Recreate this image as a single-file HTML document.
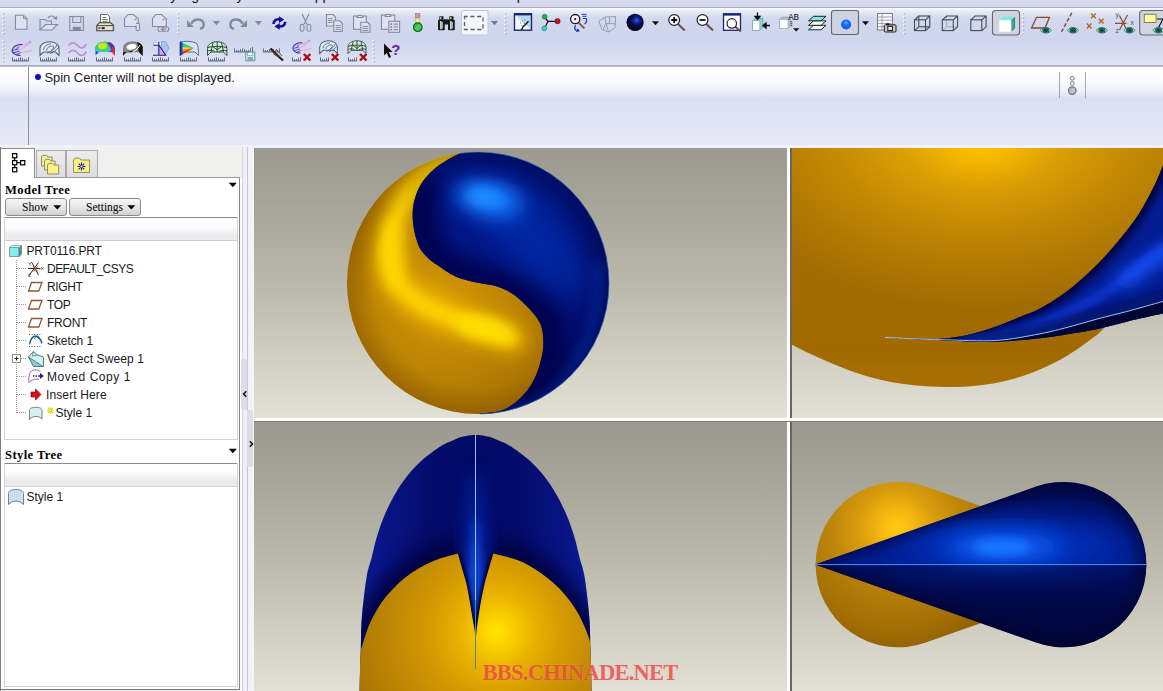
<!DOCTYPE html>
<html lang="en">
<head>
<meta charset="utf-8">
<title>PRT0116 - Style</title>
<style>
html,body{margin:0;padding:0;}
body{width:1163px;height:691px;overflow:hidden;position:relative;background:#e6e8f5;font-family:"Liberation Sans","Noto Sans CJK TC",sans-serif;font-size:12px;color:#1a1a1a;}
.abs{position:absolute;}
#menubar{left:0;top:0;width:1163px;height:7px;background:#d6dbf0;overflow:hidden;}
#menubar span{position:absolute;top:-12.500px;font-size:14px;line-height:14px;color:#111;white-space:nowrap;}
#menuline{left:0;top:7px;width:1163px;height:1px;background:#a9adc4;}
#toolbar{left:0;top:8px;width:1163px;height:57px;background:linear-gradient(to bottom,#fbfcff 0px,#e9ecf8 3px,#d3d9ee 10px,#ced5ec 30px,#d4daef 42px,#e0e4f4 57px);}
#toolline{left:0;top:65px;width:1163px;height:2px;background:linear-gradient(to bottom,#9c9fb4,#c9cbd9);}
#msg{left:0;top:67px;width:1163px;height:78px;background:linear-gradient(to bottom,#ffffff 0px,#fbfbfe 14px,#f2f3fb 22px,#dcdff1 31px,#dfe2f3 45px,#e7e9f6 78px);}
#msgsep{left:28px;top:67px;width:1px;height:78px;background:#8d8f9c;}
#msgtext{left:44.5px;top:70px;font-size:13px;line-height:16px;white-space:nowrap;color:#1c1c1c;letter-spacing:-0.06px;}
#bullet{left:35px;top:74px;width:6px;height:6px;border-radius:3px;background:#1010c0;}
#midline{left:0;top:145px;width:1163px;height:3px;background:#f1f2f9;}
/* left panel */
#panel{left:0;top:147px;width:242px;height:544px;background:#f0f0ee;}
#panelL{left:0;top:147px;width:1px;height:544px;background:#7f7f86;}
#panelwhite{left:1px;top:177px;width:238px;height:512px;background:#fff;border-right:1px solid #85858a;border-bottom:1px solid #75757a;}
.tab{position:absolute;background:linear-gradient(to bottom,#ededed,#dcdce2);border:1px solid #a9a9ae;border-bottom:none;}
.sect{position:absolute;font-family:"Liberation Serif",serif;font-weight:bold;font-size:12.6px;line-height:14px;color:#000;white-space:nowrap;letter-spacing:0.4px;}
.btn{position:absolute;height:16px;border:1px solid #8c8c8c;border-radius:3px;background:linear-gradient(to bottom,#f6f6f6 0%,#e6e6e6 50%,#d2d2d2 100%);font-family:"Liberation Serif",serif;font-size:11.5px;line-height:16px;color:#000;white-space:nowrap;}
.hdr{position:absolute;left:5px;width:232px;background:linear-gradient(to bottom,#ffffff 0%,#fdfdfd 40%,#e9e9ee 80%,#ececf0 100%);border-top:1px solid #8a8a8a;border-bottom:1px solid #cfcfd3;}
.ti{position:absolute;font-size:12px;line-height:14px;white-space:nowrap;color:#1a1a1a;}
.hd{position:absolute;height:1px;background-image:repeating-linear-gradient(to right,#9a9a9a 0,#9a9a9a 1px,transparent 1px,transparent 2px);}
.vd{position:absolute;width:1px;background-image:repeating-linear-gradient(to bottom,#9a9a9a 0,#9a9a9a 1px,transparent 1px,transparent 2px);}
/* sash */
#sash{left:242px;top:147px;width:12px;height:544px;background:linear-gradient(to right,#d6d7de 0px,#d6d7de 1px,#eef0f8 1px,#eef0f8 5px,#c5c9da 5px,#c5c9da 6px,#f1f2f9 6px,#f4f5fb 12px);}
/* viewports */
.vp{position:absolute;overflow:hidden;background:linear-gradient(to bottom,#9c9990 0%,#a6a397 20%,#bab7ab 50%,#d3d0c4 80%,#e3e0d5 100%);}
#vdiv{left:787px;top:148px;width:3px;height:543px;background:#fdfdff;}
#vdiv2{left:790px;top:148px;width:2px;height:543px;background:#69655f;}
#hdiv{left:254px;top:418px;width:909px;height:3px;background:#fdfdff;}
#hdiv2{left:254px;top:421px;width:909px;height:1px;background:#7d796f;}
#wm{left:482.500px;top:659.500px;font-family:"Liberation Serif",serif;font-weight:bold;font-size:22.500px;line-height:26px;color:rgba(232,44,52,0.660);white-space:nowrap;letter-spacing:-0.750px;text-shadow:0 0 1.500px rgba(255,190,150,0.500);}
</style>
</head>
<body>
<!-- menu bar (cut off at the top edge) -->
<div id="menubar" class="abs">
<span style="left:14px">File</span><span style="left:52px">Edit</span><span style="left:94px">View</span><span style="left:157px">Styling</span><span style="left:208.500px">Analysis</span><span style="left:270px">Info</span><span style="left:305.500px">Applications</span><span style="left:394px">Tools</span><span style="left:438px">Window</span><span style="left:495.800px">Help</span>
</div>
<div id="menuline" class="abs"></div>
<div id="toolbar" class="abs"></div>
<div id="toolline" class="abs"></div>
<div id="msg" class="abs"></div>
<div id="msgsep" class="abs"></div>
<div id="bullet" class="abs"></div>
<div id="msgtext" class="abs">Spin Center will not be displayed.</div>
<div id="midline" class="abs"></div>

<!-- LEFT PANEL -->
<div id="panel" class="abs"></div>
<div class="abs" style="left:240px;top:178px;width:2px;height:513px;background:#fdfdfd;"></div>
<div id="panelwhite" class="abs"></div>
<div id="panelL" class="abs"></div>
<!--TABS--><div class="abs" style="left:35px;top:177px;width:205px;height:1px;background:#9a9a9e;"></div>
<div class="abs" style="left:0;top:148px;width:35px;height:30px;background:#fff;border-top:1px solid #8e8e92;border-right:1px solid #8e8e92;border-left:1px solid #7f7f86;box-sizing:border-box;"></div>
<div class="tab" style="left:36px;top:150px;width:28px;height:26px;"></div>
<div class="tab" style="left:66px;top:150px;width:30px;height:26px;"></div>
<svg class="abs" style="left:0;top:148px" width="100" height="30" viewBox="0 148 100 30">
<g fill="#fff" stroke="#000" stroke-width="1.2">
<rect x="12.6" y="153.6" width="4.2" height="4.2"/><rect x="12.6" y="160.6" width="4.2" height="4.2"/><rect x="12.6" y="167.6" width="4.2" height="4.2"/><rect x="20.6" y="160.6" width="4.2" height="4.2"/>
</g>
<path d="M14.7 158v2.4M14.7 165v2.4M17 162.7h3.4" stroke="#000" stroke-width="1.2" fill="none"/>
<g stroke="#8a8658" stroke-width="0.9">
<path d="M41.5 166V157l1.2-1.6h4l1.2 1.6h4.2V166Z" fill="#f3ec9a"/>
<path d="M44.5 170V161l1.2-1.6h4l1.2 1.6h4.2V170Z" fill="#f5ee94"/>
<path d="M47.5 174V165l1.2-1.6h4l1.2 1.6h4.8V174Z" fill="#f8f18a"/>
<path d="M73.5 172.5V160l1.4-1.8h4.6l1.4 1.8h8.6v12.5Z" fill="#f7f07e"/>
</g>
<g stroke="#1a20b0" stroke-width="1.1"><path d="M81.5 162.5v8M77.5 166.5h8M78.7 163.7l5.6 5.6M84.3 163.7l-5.6 5.6"/></g>
<circle cx="81.5" cy="166.5" r="1.3" fill="#fff" stroke="#1a20b0" stroke-width="0.6"/>
</svg><!--/TABS-->
<!--TREE--><div class="sect" style="left:5px;top:182.5px;">Model Tree</div>
<svg class="abs" style="left:228px;top:182px" width="10" height="6" viewBox="0 0 10 6"><path d="M0.8 0.8h8L4.8 5.2Z" fill="#000"/></svg>
<div class="btn" style="left:5px;top:198px;width:60px;"><span style="position:absolute;left:16px;top:0;">Show</span><svg style="position:absolute;left:47px;top:6px" width="9" height="5" viewBox="0 0 9 5"><path d="M0.3 0.2h8L4.3 4.6Z" fill="#000"/></svg></div>
<div class="btn" style="left:69px;top:198px;width:70px;"><span style="position:absolute;left:16px;top:0;">Settings</span><svg style="position:absolute;left:57px;top:6px" width="9" height="5" viewBox="0 0 9 5"><path d="M0.3 0.2h8L4.3 4.6Z" fill="#000"/></svg></div>
<div class="abs" style="left:4px;top:217px;width:234px;height:223px;border:1px solid #d2d2d6;border-top:none;box-sizing:border-box;"></div>
<div class="hdr" style="top:217px;height:22px;"></div>
<!-- tree connector lines -->
<div class="vd" style="left:16px;top:260px;height:153px;"></div>
<div class="hd" style="left:17px;top:268px;width:10px;"></div>
<div class="hd" style="left:17px;top:286px;width:10px;"></div>
<div class="hd" style="left:17px;top:304px;width:10px;"></div>
<div class="hd" style="left:17px;top:322px;width:10px;"></div>
<div class="hd" style="left:17px;top:340px;width:10px;"></div>
<div class="hd" style="left:21px;top:358px;width:6px;"></div>
<div class="hd" style="left:17px;top:376px;width:10px;"></div>
<div class="hd" style="left:17px;top:394px;width:10px;"></div>
<div class="hd" style="left:17px;top:412px;width:10px;"></div>
<!-- tree labels -->
<div class="ti" style="left:26.5px;top:244px;letter-spacing:-0.13px;">PRT0116.PRT</div>
<div class="ti" style="left:47px;top:262px;letter-spacing:-0.53px;">DEFAULT_CSYS</div>
<div class="ti" style="left:47px;top:280px;letter-spacing:-0.40px;">RIGHT</div>
<div class="ti" style="left:47px;top:298px;letter-spacing:-0.38px;">TOP</div>
<div class="ti" style="left:47px;top:316px;letter-spacing:-0.22px;">FRONT</div>
<div class="ti" style="left:47px;top:334px;letter-spacing:-0.08px;">Sketch 1</div>
<div class="ti" style="left:47px;top:352px;letter-spacing:0.12px;">Var Sect Sweep 1</div>
<div class="ti" style="left:47px;top:370px;letter-spacing:0.55px;">Moved Copy 1</div>
<div class="ti" style="left:46px;top:388px;letter-spacing:0.12px;">Insert Here</div>
<div class="ti" style="left:55.5px;top:406px;letter-spacing:-0.02px;">Style 1</div>
<!-- style tree -->
<div class="sect" style="left:5px;top:448px;">Style Tree</div>
<svg class="abs" style="left:228px;top:448px" width="10" height="6" viewBox="0 0 10 6"><path d="M0.8 0.8h8L4.8 5.2Z" fill="#000"/></svg>
<div class="abs" style="left:4px;top:463px;width:234px;height:224px;border:1px solid #d2d2d6;border-top:none;box-sizing:border-box;"></div>
<div class="hdr" style="top:463px;height:22px;"></div>
<div class="ti" style="left:26.5px;top:490px;letter-spacing:-0.02px;">Style 1</div>
<!--TREEICONS--><svg class="abs" style="left:0;top:240px" width="60" height="270" viewBox="0 240 60 270">
<!-- part cube -->
<path d="M9.5 247.5h9.5v9h-9.5Z" fill="#86ecf4" stroke="#6a8a94" stroke-width="0.8"/>
<path d="M19 247.5l2.6-2v8.8l-2.6 2.2Z" fill="#4f8e98" stroke="#56767e" stroke-width="0.6"/>
<path d="M9.5 247.5l2.6-2h9.5l-2.6 2Z" fill="#c8f6fa" stroke="#6a8a94" stroke-width="0.6"/>
<!-- csys -->
<g stroke="#2a2a2a" stroke-width="1" fill="none"><path d="M28 268.5h12.5"/><path d="M31.5 262l7 13"/><path d="M29 275.5l9.5-13"/></g>
<g stroke="#8b4a1c" stroke-width="1.1" fill="none"><path d="M33 266l4.5 5.5M33.5 271.5l4-5"/></g>
<g stroke="#555" stroke-width="0.8" fill="none"><path d="M41 267l2.6 2.8M43.6 267l-2.6 2.8"/><path d="M28.5 262.5l1.4 1.6 1.2-1.8M29.9 264.1v1.5"/><path d="M28.3 274.2h2.2l-2.2 2.2h2.4"/></g>
<!-- datum planes -->
<g fill="none" stroke="#8b5a3a" stroke-width="1.3"><path d="M31.5 282.5h10.5l-3.2 8.5h-10.3Z"/><path d="M31.5 300.5h10.5l-3.2 8.5h-10.3Z"/><path d="M31.5 318.5h10.5l-3.2 8.5h-10.3Z"/></g>
<!-- sketch -->
<g fill="none" stroke="#2a62b8" stroke-width="1" stroke-dasharray="1 1.6"><path d="M29 334.5h13M29 346.5h13"/></g>
<path d="M29.5 344.5c1-6 4-8.5 6.5-8.5s4.5 3 6 7.5" fill="none" stroke="#1a5a8c" stroke-width="1.4"/>
<path d="M34 339l3-2.5 2.5 3" fill="none" stroke="#1a5a8c" stroke-width="0.9"/>
<!-- expand box -->
<rect x="12.5" y="354.5" width="8" height="8" fill="#fff" stroke="#8c8c8c" stroke-width="1"/>
<path d="M14.5 358.5h4M16.5 356.5v4" stroke="#222" stroke-width="1"/>
<!-- var sect sweep -->
<path d="M28.5 357l4.8-5.5 4.2 3.5 6 2v9.5h-9.5Z" fill="#d4f2f4" stroke="#3a6e80" stroke-width="0.9"/>
<path d="M28.5 357l5 9.5h9.5Z" fill="#9ec4cc" stroke="#3a6e80" stroke-width="0.8"/>
<path d="M33.3 351.5l-0.8 4.5 5-1" fill="none" stroke="#3a6e80" stroke-width="0.7"/>
<!-- moved copy -->
<path d="M29 382.5c-1-7 1-12 5-12.5 3-0.5 5 0.5 6.5 2M29 382.5c2-2.5 6-4 10-3" fill="none" stroke="#a060b8" stroke-width="1"/>
<path d="M33 376h1.4M35.6 376h1.4M38.2 376h1.8" stroke="#401070" stroke-width="1.6"/>
<path d="M40 373l3.8 3-3.8 3Z" fill="#401070"/>
<!-- insert here arrow -->
<path d="M31 392h4.5v-3.2l5.5 5.7-5.5 5.7v-3.2H31Z" fill="#d81010" stroke="#7a0000" stroke-width="0.6"/>
<!-- style surface -->
<path d="M29.5 419.5v-9c0-2 2.5-3.2 6.500-3.200s6 1.200 6 3.200v8.500c-3-3.500-9.500-3.500-12.500 0.500Z" fill="#d8f0f2" stroke="#5a7a82" stroke-width="0.9"/>
<!-- asterisk -->
<g stroke="#d4d400" stroke-width="1.200"><path d="M50.500 407v7M47 410.500h7M48 408l5 5M53 408l-5 5"/></g>
<g stroke="#f8f840" stroke-width="0.600"><path d="M50.500 407.500v6M47.500 410.500h6"/></g>
<!-- style tree item icon -->
<path d="M8.500 504.500v-11c0-2.500 3-4 7.500-4s7.500 1.500 7.500 4v11c-3.500-4.500-11.500-4.500-15 0Z" fill="#cfe4f8" stroke="#6a8098" stroke-width="1"/>
<g stroke="#8ab0dc" stroke-width="0.5" stroke-dasharray="0.8 1.200"><path d="M10 492h12M10 494h12M10 496h12M10 498h12M10 500h12"/></g>
</svg><!--/TREE-->

<div id="sash" class="abs"></div>
<div class="abs" style="left:241px;top:359px;width:6px;height:51px;background:#dddde6;border-radius:2px;"></div>
<div class="abs" style="left:247px;top:410px;width:6px;height:57px;background:#dddde6;border-radius:2px;"></div>
<svg class="abs" style="left:241px;top:388px" width="14" height="62" viewBox="241 388 14 62"><path d="M246.300 391.200l-2.700 2.800 2.700 2.800" fill="none" stroke="#101010" stroke-width="1.500"/><path d="M249.800 441.200l2.700 2.800-2.700 2.800" fill="none" stroke="#101010" stroke-width="1.500"/></svg>

<!-- VIEWPORTS -->
<div class="vp" id="vp1" style="left:254px;top:148px;width:533px;height:270px;"><svg class="abs" style="left:0;top:0" width="533" height="270" viewBox="254 148 533 270">
<defs>
<clipPath id="c1"><circle cx="478" cy="283" r="131"/></clipPath>
<clipPath id="c1b"><path d="M459.5 153.5C457.6 154.5 452.2 156.9 447.9 159.6C443.5 162.3 437.7 165.8 433.4 169.7C429.1 173.5 424.9 178.1 421.9 182.7C418.9 187.3 416.8 192.4 415.3 197.2C413.8 202.0 412.9 206.4 412.7 211.7C412.5 217.0 412.8 223.2 413.9 229C414.9 234.8 416.8 241.7 419 246.4C421.2 251.1 424.1 254.0 427 257C429.9 260.0 431.7 261.3 436.5 264.6C441.3 267.9 449.0 273.7 455.9 276.7C462.8 279.7 470.9 281.2 477.8 282.8C484.7 284.4 491.1 284.5 497.2 286.5C503.3 288.5 508.9 291.4 514.2 295C519.5 298.6 524.7 304.1 528.8 308.3C532.9 312.6 536.3 316.7 538.6 320.5C540.9 324.3 541.6 326.6 542.4 331C543.2 335.4 543.6 341.7 543.2 347.2C542.8 352.7 541.5 358.5 539.8 364.2C538.1 369.9 536.1 376.0 533.2 381.3C530.4 386.6 526.7 391.6 522.7 395.8C518.7 400.1 513.6 404.2 509.4 406.8C505.1 409.4 502.1 410.5 497.2 411.6C492.3 412.7 483.0 413.3 480.2 413.6L480 430L640 430L640 130L455 130Z"/></clipPath>
<radialGradient id="g1gold" cx="440" cy="300" r="140" gradientUnits="userSpaceOnUse">
<stop offset="0" stop-color="#d29606"/><stop offset="0.5" stop-color="#bc8404"/><stop offset="0.85" stop-color="#a87202"/><stop offset="1" stop-color="#966200"/>
</radialGradient>
<radialGradient id="g1rim" cx="478" cy="283" r="131" gradientUnits="userSpaceOnUse">
<stop offset="0" stop-color="#7a4c00" stop-opacity="0"/><stop offset="0.8" stop-color="#7a4c00" stop-opacity="0"/><stop offset="1" stop-color="#7a4c00" stop-opacity="0.4"/>
</radialGradient>
<radialGradient id="g1brim" cx="478" cy="283" r="131" gradientUnits="userSpaceOnUse"><stop offset="0" stop-color="#000648" stop-opacity="0"/><stop offset="0.78" stop-color="#000648" stop-opacity="0"/><stop offset="1" stop-color="#000648" stop-opacity="0.550"/></radialGradient>
<radialGradient id="g1blue" cx="500" cy="215" r="190" gradientUnits="userSpaceOnUse">
<stop offset="0" stop-color="#001a90"/><stop offset="0.35" stop-color="#001684"/><stop offset="0.7" stop-color="#001076"/><stop offset="1" stop-color="#000a64"/>
</radialGradient>
<filter id="b6" x="-50%" y="-50%" width="200%" height="200%"><feGaussianBlur stdDeviation="6"/></filter>
<filter id="b10" x="-50%" y="-50%" width="200%" height="200%"><feGaussianBlur stdDeviation="10"/></filter>
<filter id="b14" x="-50%" y="-50%" width="200%" height="200%"><feGaussianBlur stdDeviation="14"/></filter>
</defs>
<g clip-path="url(#c1)">
<circle cx="478" cy="283" r="132" fill="url(#g1gold)"/>
<path d="M452 157C450.0 157.8 444.7 159.3 440 162C435.3 164.7 429.0 168.8 424 173C419.0 177.2 414.0 182.0 410 187C406.0 192.0 402.8 197.2 400 203C397.2 208.8 394.8 215.0 393 222C391.2 229.0 390.0 237.8 389.5 245C389.0 252.2 388.6 258.7 390 265C391.4 271.3 394.3 277.5 398 283C401.7 288.5 405.4 293.2 412 298C418.6 302.8 428.1 307.7 437.6 312C447.1 316.3 459.2 320.4 468.9 323.7C478.6 326.9 488.9 328.9 496 331.5C503.1 334.1 509.2 338.0 511.8 339.3" fill="none" stroke="#ffcc00" stroke-width="24" stroke-linecap="round" filter="url(#b10)"/>
<path d="M452 157C450.0 157.8 444.7 159.3 440 162C435.3 164.7 429.0 168.8 424 173C419.0 177.2 414.0 182.0 410 187C406.0 192.0 402.8 197.2 400 203C397.2 208.8 394.8 215.0 393 222C391.2 229.0 390.0 237.8 389.5 245C389.0 252.2 388.6 258.7 390 265C391.4 271.3 394.3 277.5 398 283C401.7 288.5 405.4 293.2 412 298C418.6 302.8 428.1 307.7 437.6 312C447.1 316.3 459.2 320.4 468.9 323.7C478.6 326.9 488.9 328.9 496 331.5C503.1 334.1 509.2 338.0 511.8 339.3" fill="none" stroke="#ffe000" stroke-width="8" stroke-linecap="round" filter="url(#b6)" opacity="0.9"/>
<ellipse cx="484" cy="329" rx="30" ry="12" transform="rotate(16 484 329)" fill="#ffe000" filter="url(#b6)" opacity="0.850"/>
<ellipse cx="392" cy="255" rx="11" ry="38" transform="rotate(-4 392 255)" fill="#ffd800" filter="url(#b6)" opacity="0.700"/>
<circle cx="478" cy="283" r="131" fill="url(#g1rim)"/>
<g clip-path="url(#c1b)">
<rect x="380" y="140" width="250" height="290" fill="url(#g1blue)"/>
<path d="M430 175C415 200 415 240 440 262C470 285 520 280 545 320C556 345 545 385 515 410" fill="none" stroke="#000448" stroke-width="34" filter="url(#b10)" opacity="0.9"/>
<ellipse cx="535" cy="240" rx="70" ry="26" transform="rotate(48 535 240)" fill="#0430b4" filter="url(#b14)" opacity="0.6"/>
<ellipse cx="489" cy="199" rx="34" ry="17" transform="rotate(12 489 199)" fill="#1278ff" filter="url(#b10)"/>
<ellipse cx="485" cy="197" rx="18" ry="9" transform="rotate(8 485 197)" fill="#1a8cff" filter="url(#b6)"/>
<circle cx="478" cy="283" r="131" fill="url(#g1brim)"/>
<path d="M597 262C602 300 594 346 558 388C545 401 528 409 508 412" fill="none" stroke="#0a36b8" stroke-width="7" filter="url(#b6)" opacity="0.7"/>
</g>
</g>
<circle cx="478" cy="283" r="131" fill="none" stroke="#3a78c8" stroke-width="0.8" stroke-dasharray="203 396 224 0" opacity="0.800"/>
</svg></div>
<div class="vp" id="vp2" style="left:792px;top:148px;width:371px;height:270px;"><svg class="abs" style="left:0;top:0" width="371" height="270" viewBox="792 148 371 270">
<defs>
<clipPath id="c2g"><path d="M770 332C773.7 334.1 783.8 340.5 792 344.8C800.2 349.1 810.3 353.9 819.5 358C828.7 362.1 837.8 366.1 847 369.5C856.2 372.9 865.4 375.9 874.6 378.3C883.8 380.7 892.8 382.4 902 383.8C911.2 385.2 920.4 386.1 929.6 386.6C938.8 387.1 947.8 387.2 957 386.9C966.2 386.6 975.4 386.0 984.6 384.7C993.8 383.4 1002.8 381.7 1012 379.2C1021.2 376.7 1030.5 373.4 1039.7 369.5C1048.9 365.6 1057.8 361.3 1067 355.8C1076.2 350.3 1088.9 340.7 1094.7 336.5C1100.5 332.3 1096.5 335.2 1101.6 330.5C1106.6 325.8 1121.1 311.8 1125 308L1180 140L770 140Z"/></clipPath>
<clipPath id="c2b"><path d="M885 337.4C891.3 337.7 912.9 338.8 923 339C933.1 339.2 937.6 339.3 945.6 338.5C953.6 337.7 962.4 336.2 970.8 334.2C979.2 332.2 987.6 329.6 996 326.6C1004.4 323.7 1013.7 319.5 1021 316.5C1028.3 313.5 1032.0 313.1 1040 308.6C1048.0 304.2 1059.3 297.3 1069 289.8C1078.7 282.3 1089.2 272.5 1097.9 263.8C1106.6 255.1 1114.2 245.9 1121 237.7C1127.8 229.5 1133.1 222.8 1138.4 214.6C1143.7 206.4 1148.8 196.7 1152.9 188.5C1157.0 180.3 1159.8 173.2 1163 165.4C1166.2 157.7 1170.5 145.9 1172 142L1172 311.5C1170.5 311.9 1170.5 311.9 1163 313.6C1155.5 315.3 1137.6 319.1 1126.8 321.7C1116.0 324.2 1107.5 326.8 1097.9 328.9C1088.3 330.9 1078.7 332.4 1069 334C1059.3 335.6 1052.2 337.0 1040 338.3C1027.8 339.6 1011.7 341.3 996 341.7C980.3 342.1 957.8 340.9 945.6 340.5C933.4 340.1 933.1 340.1 923 339.6C912.9 339.1 891.3 337.8 885 337.4Z"/></clipPath>
<radialGradient id="g2gold" cx="981" cy="140" r="1" gradientUnits="userSpaceOnUse" gradientTransform="translate(981 140) scale(260 170) translate(-981 -140)">
<stop offset="0" stop-color="#ffc800"/><stop offset="0.12" stop-color="#f6b800"/><stop offset="0.3" stop-color="#dca004"/><stop offset="0.55" stop-color="#c68c04"/><stop offset="0.8" stop-color="#b47c03"/><stop offset="1" stop-color="#a87002"/>
</radialGradient>
<linearGradient id="g2dark" x1="0" y1="148" x2="0" y2="390" gradientUnits="userSpaceOnUse">
<stop offset="0" stop-color="#8a5600" stop-opacity="0"/><stop offset="0.6" stop-color="#8a5600" stop-opacity="0.18"/><stop offset="0.85" stop-color="#8a5600" stop-opacity="0.25"/><stop offset="1" stop-color="#a06800" stop-opacity="0"/>
</linearGradient>
<filter id="b2a" x="-50%" y="-50%" width="200%" height="200%"><feGaussianBlur stdDeviation="4"/></filter>
<filter id="b2b" x="-50%" y="-50%" width="200%" height="200%"><feGaussianBlur stdDeviation="8"/></filter>
</defs>
<g clip-path="url(#c2g)">
<rect x="780" y="140" width="390" height="260" fill="url(#g2gold)"/>
<rect x="780" y="140" width="390" height="260" fill="url(#g2dark)"/>
</g>
<g clip-path="url(#c2b)">
<rect x="880" y="140" width="290" height="210" fill="#041c92"/>
<path d="M885 337.4C891.3 337.7 912.9 338.8 923 339C933.1 339.2 937.6 339.3 945.6 338.5C953.6 337.7 962.4 336.2 970.8 334.2C979.2 332.2 987.6 329.6 996 326.6C1004.4 323.7 1013.7 319.5 1021 316.5C1028.3 313.5 1032.0 313.1 1040 308.6C1048.0 304.2 1059.3 297.3 1069 289.8C1078.7 282.3 1089.2 272.5 1097.9 263.8C1106.6 255.1 1114.2 245.9 1121 237.7C1127.8 229.5 1133.1 222.8 1138.4 214.6C1143.7 206.4 1148.8 196.7 1152.9 188.5C1157.0 180.3 1159.8 173.2 1163 165.4C1166.2 157.7 1170.5 145.9 1172 142" fill="none" stroke="#00053a" stroke-width="20" filter="url(#b2a)" transform="translate(-3 -3)"/>
<path d="M960 340C1010 338 1060 320 1100 296C1135 272 1150 256 1172 243" fill="none" stroke="#0a36d0" stroke-width="10" filter="url(#b2a)"/>
<path d="M1120 284C1140 270 1155 258 1178 247" fill="none" stroke="#1656ff" stroke-width="13" filter="url(#b2b)"/>
<path d="M885 337.4C891.3 337.7 912.9 338.8 923 339.2C933.1 339.6 933.4 339.6 945.6 339.8C957.8 340.0 980.3 341.5 996 340.5C1011.7 339.5 1027.8 336.1 1040 333.8C1052.2 331.5 1059.3 329.4 1069 326.9C1078.7 324.4 1088.3 321.4 1097.9 318.8C1107.5 316.2 1116.0 314.4 1126.8 311.5C1137.6 308.6 1155.5 303.5 1163 301.4C1170.5 299.3 1170.5 299.4 1172 299" fill="none" stroke="#000850" stroke-width="9" filter="url(#b2a)" transform="translate(0 -5)" opacity="0.7"/>
<path d="M885 337.4C891.3 337.7 912.9 338.8 923 339.2C933.1 339.6 933.4 339.6 945.6 339.8C957.8 340.0 980.3 341.5 996 340.5C1011.7 339.5 1027.8 336.1 1040 333.8C1052.2 331.5 1059.3 329.4 1069 326.9C1078.7 324.4 1088.3 321.4 1097.9 318.8C1107.5 316.2 1116.0 314.4 1126.8 311.5C1137.6 308.6 1155.5 303.5 1163 301.4C1170.5 299.3 1170.5 299.4 1172 299L1172 330L885 350Z" fill="#000634"/>
</g>
<path d="M885 337.4C891.3 337.7 912.9 338.8 923 339.2C933.1 339.6 933.4 339.6 945.6 339.8C957.8 340.0 980.3 341.5 996 340.5C1011.7 339.5 1027.8 336.1 1040 333.8C1052.2 331.5 1059.3 329.4 1069 326.9C1078.7 324.4 1088.3 321.4 1097.9 318.8C1107.5 316.2 1116.0 314.4 1126.8 311.5C1137.6 308.6 1155.5 303.5 1163 301.4C1170.5 299.3 1170.5 299.4 1172 299" fill="none" stroke="#9cc4ee" stroke-width="1"/>
</svg></div>
<div class="vp" id="vp3" style="left:254px;top:422px;width:533px;height:270px;"><svg class="abs" style="left:0;top:0" width="533" height="270" viewBox="254 422 533 270">
<defs>
<clipPath id="c3d"><path d="M359.4 700C359.5 695.0 359.8 678.5 360.0 670C360.2 661.5 360.5 658.0 360.8 649C361.1 640.0 361.0 628.0 362.0 616C363.0 604.0 365.0 586.7 366.6 577C368.2 567.3 369.9 564.2 371.6 557.7C373.3 551.2 374.5 544.6 376.6 537.7C378.7 530.9 381.0 523.7 384.0 516.6C387.0 509.5 390.6 501.8 394.5 495C398.4 488.2 402.6 481.9 407.2 476.1C411.8 470.3 416.6 465.1 421.9 460.3C427.2 455.6 434.5 450.6 438.8 447.6C443.1 444.7 444.7 444.1 447.6 442.6C450.5 441.2 453.9 439.8 456.1 438.9C458.4 438.0 459.4 437.6 461.1 437.1C462.8 436.6 464.5 436.2 466.1 435.9C467.7 435.6 469.0 435.4 470.6 435.3C472.2 435.2 473.9 435.0 475.6 435.0C477.3 435.0 479.0 435.2 480.6 435.3C482.2 435.4 483.5 435.6 485.1 435.9C486.7 436.2 488.4 436.6 490.1 437.1C491.8 437.6 492.9 438.0 495.1 438.9C497.4 439.8 500.7 441.2 503.6 442.6C506.5 444.1 508.1 444.7 512.4 447.6C516.7 450.6 524.0 455.6 529.3 460.3C534.6 465.1 539.4 470.3 544.0 476.1C548.6 481.9 552.8 488.2 556.7 495C560.6 501.8 564.2 509.5 567.2 516.6C570.2 523.7 572.5 530.9 574.6 537.7C576.7 544.6 577.9 551.2 579.6 557.7C581.3 564.2 583.0 567.3 584.6 577C586.2 586.7 588.2 604.0 589.2 616C590.2 628.0 590.1 640.0 590.4 649C590.7 658.0 591.0 661.5 591.2 670C591.4 678.5 591.7 695.0 591.8 700Z"/></clipPath>
<clipPath id="c3g"><path d="M355 670C356.0 666.5 358.9 656.4 361.1 649.3C363.3 642.2 365.5 634.0 368.1 627.4C370.7 620.8 373.6 615.4 376.9 609.9C380.2 604.4 383.4 599.7 387.8 594.6C392.2 589.5 397.6 583.8 403.1 579.3C408.6 574.8 414.8 570.6 420.6 567.3C426.4 563.9 431.8 561.5 438 559.2C444.2 556.9 454.6 554.5 457.9 553.5C458.6 556.0 460.7 563.4 462.1 568.4C463.5 573.4 465.1 578.2 466.4 583.7C467.7 589.2 468.7 595.4 469.7 601.2C470.7 607.0 471.8 613.9 472.6 618.7C473.4 623.5 474.1 626.5 474.6 630C475.1 633.5 475.3 638.3 475.4 640L475.8 640C475.9 638.3 476.2 633.5 476.6 630C477.0 626.5 477.5 623.5 478.2 618.7C478.9 613.9 479.9 607.0 481 601.2C482.1 595.4 483.3 589.2 484.6 583.7C485.9 578.2 487.4 573.4 488.9 568.4C490.3 563.4 492.6 556.0 493.3 553.5C496.5 554.4 506.6 556.5 512.7 558.6C518.9 560.7 524.4 562.9 530.2 566.2C536.0 569.5 542.2 573.8 547.7 578.2C553.2 582.6 558.3 587.1 563 592.4C567.7 597.7 572.5 604.1 576.1 609.9C579.8 615.7 582.4 621.6 584.9 627.4C587.4 633.2 589.0 637.8 591 644.9C593.0 652.0 596.0 665.8 597 670L600 700L350 700Z"/></clipPath>
<linearGradient id="g3blue" x1="359" y1="0" x2="592" y2="0" gradientUnits="userSpaceOnUse">
<stop offset="0" stop-color="#0c1c96"/><stop offset="0.12" stop-color="#081484"/><stop offset="0.3" stop-color="#040c6c"/><stop offset="0.5" stop-color="#020a66"/><stop offset="0.7" stop-color="#040c6c"/><stop offset="0.88" stop-color="#081484"/><stop offset="1" stop-color="#0c1c96"/>
</linearGradient>
<radialGradient id="g3gold" cx="497" cy="632" r="150" gradientUnits="userSpaceOnUse">
<stop offset="0" stop-color="#ffe400"/><stop offset="0.1" stop-color="#fbd000"/><stop offset="0.25" stop-color="#eab200"/><stop offset="0.45" stop-color="#d39a02"/><stop offset="0.7" stop-color="#c08804"/><stop offset="1" stop-color="#a87404"/>
</radialGradient>
<filter id="b3c" filterUnits="userSpaceOnUse" x="330" y="422" width="290" height="280"><feGaussianBlur stdDeviation="1.800"/></filter>
<filter id="b3a" filterUnits="userSpaceOnUse" x="330" y="422" width="290" height="280"><feGaussianBlur stdDeviation="4"/></filter>
<filter id="b3b" filterUnits="userSpaceOnUse" x="330" y="422" width="290" height="280"><feGaussianBlur stdDeviation="9"/></filter>
</defs>
<g clip-path="url(#c3d)">
<rect x="350" y="430" width="250" height="265" fill="url(#g3blue)"/>
<path d="M360 650C375 600 410 565 458 552" fill="none" stroke="#00053a" stroke-width="30" filter="url(#b3b)" opacity="0.9"/>
<path d="M591 650C576 600 541 565 493 552" fill="none" stroke="#00053a" stroke-width="30" filter="url(#b3b)" opacity="0.9"/>
<path d="M475.6 470L468 560L475.6 640L483 560Z" fill="#0a34c8" stroke="#0a34c8" stroke-width="5" filter="url(#b3b)" opacity="0.8"/>
<path d="M475.6 520L472.5 575L475.6 635L478.5 575Z" fill="#1464ff" stroke="#1464ff" stroke-width="2" filter="url(#b3a)" opacity="0.9"/>
<path d="M457.900 553.500C462 568 466.400 584 469.700 601C472 615 474 628 475.400 640" fill="none" stroke="#00053a" stroke-width="5" filter="url(#b3c)" opacity="0.9"/>
<path d="M493.300 553.500C489 568 484.600 584 481 601C478.500 615 476.800 628 475.800 640" fill="none" stroke="#00053a" stroke-width="5" filter="url(#b3c)" opacity="0.9"/>
<g clip-path="url(#c3g)">
<rect x="350" y="540" width="250" height="160" fill="url(#g3gold)"/>
</g>
</g>
<path d="M475.5 435L475.5 600" stroke="#8cc4ff" stroke-width="1" fill="none"/>
<path d="M475.5 600L475.5 669" stroke="#4a86a0" stroke-width="1" fill="none"/>
</svg></div>
<div class="vp" id="vp4" style="left:792px;top:422px;width:371px;height:270px;"><svg class="abs" style="left:0;top:0" width="371" height="270" viewBox="792 422 371 270">
<defs>
<clipPath id="c4g"><path d="M925.8 486.6L1146.4 564.6L925.8 642.6A82.7 82.7 0 1 1 925.8 486.6Z"/></clipPath>
<clipPath id="c4r"><rect x="1036.2" y="470" width="130" height="190"/></clipPath>
<clipPath id="c4b"><path d="M1036.2 486.6L815 564.6L1036.2 642.6A82.7 82.7 0 1 0 1036.2 486.6Z"/></clipPath>
<radialGradient id="g4gold" cx="897" cy="528" r="120" gradientUnits="userSpaceOnUse">
<stop offset="0" stop-color="#ffcc14"/><stop offset="0.14" stop-color="#f6b810"/><stop offset="0.32" stop-color="#d89c0c"/><stop offset="0.55" stop-color="#bd860a"/><stop offset="0.85" stop-color="#a87406"/><stop offset="1" stop-color="#986804"/>
</radialGradient>
<linearGradient id="g4blue" x1="0" y1="482" x2="0" y2="648" gradientUnits="userSpaceOnUse">
<stop offset="0" stop-color="#00084c"/><stop offset="0.18" stop-color="#000e62"/><stop offset="0.36" stop-color="#001884"/><stop offset="0.5" stop-color="#001c90"/><stop offset="0.52" stop-color="#001478"/><stop offset="0.75" stop-color="#000a54"/><stop offset="1" stop-color="#00063c"/>
</linearGradient>
<radialGradient id="g4rim" cx="1063.7" cy="564.6" r="82.7" gradientUnits="userSpaceOnUse">
<stop offset="0" stop-color="#00052e" stop-opacity="0"/><stop offset="0.8" stop-color="#00052e" stop-opacity="0"/><stop offset="1" stop-color="#00052e" stop-opacity="0.55"/>
</radialGradient>
<filter id="b4a" x="-50%" y="-50%" width="200%" height="200%"><feGaussianBlur stdDeviation="5"/></filter>
<filter id="b4b" x="-50%" y="-50%" width="200%" height="200%"><feGaussianBlur stdDeviation="11"/></filter>
<filter id="b4c" x="-50%" y="-50%" width="200%" height="200%"><feGaussianBlur stdDeviation="18"/></filter>
</defs>
<g clip-path="url(#c4g)">
<rect x="810" y="478" width="340" height="172" fill="url(#g4gold)"/>
<rect x="810" y="565" width="340" height="90" fill="#7a4a00" opacity="0.12"/>
</g>
<g clip-path="url(#c4b)">
<rect x="810" y="478" width="340" height="172" fill="url(#g4blue)"/>
<ellipse cx="1010" cy="545" rx="115" ry="22" fill="#0434c8" filter="url(#b4c)"/>
<ellipse cx="1004" cy="547" rx="58" ry="14" fill="#0c5cf4" filter="url(#b4b)"/>
<ellipse cx="1002" cy="547" rx="30" ry="8" fill="#1478ff" filter="url(#b4a)"/>
<rect x="810" y="565" width="340" height="90" fill="#00042c" opacity="0.35"/>
<g clip-path="url(#c4r)"><circle cx="1063.7" cy="564.6" r="82.7" fill="url(#g4rim)"/></g>
<path d="M815 564.6L1036.2 486.6" stroke="#00052e" stroke-width="7" filter="url(#b4a)" opacity="0.75" fill="none"/>
<path d="M815 564.6L1036.2 642.6" stroke="#00042a" stroke-width="7" filter="url(#b4a)" opacity="0.75" fill="none"/>
</g>
<path d="M815 564.6L1146.4 564.6" stroke="#5a8ce0" stroke-width="1" fill="none"/>
</svg></div>
<div id="vdiv" class="abs"></div><div id="vdiv2" class="abs"></div>
<div id="hdiv" class="abs"></div><div id="hdiv2" class="abs"></div>
<div id="wm" class="abs">BBS.CHINADE.NET</div>
<!--ICONS--><svg class="abs" style="left:0;top:8px" width="1163" height="58" viewBox="0 8 1163 58">
<defs>
<radialGradient id="gsph" cx="0.580" cy="0.380" r="0.620"><stop offset="0" stop-color="#3068f8"/><stop offset="0.200" stop-color="#1430b0"/><stop offset="0.520" stop-color="#060c48"/><stop offset="1" stop-color="#02031a"/></radialGradient>
<radialGradient id="gdot" cx="0.500" cy="0.350" r="0.650"><stop offset="0" stop-color="#70b8ff"/><stop offset="0.350" stop-color="#1870ff"/><stop offset="1" stop-color="#0a58e8"/></radialGradient>
<clipPath id="domeD"><path d="M95.500 55.500v-7c0-4 4-6.800 9.700-6.800s9.700 2.800 9.700 6.800v7l-3.500-3.500h-12.400Z"/></clipPath>
<clipPath id="domeE"><path d="M123 56v-8c0-4 4-6.800 9.800-6.800s9.900 2.800 9.900 6.800v8l-3.500-3.800h-12.500Z"/></clipPath>
<g id="eye"><ellipse cx="0" cy="0" rx="5.200" ry="2.700" fill="#ffffff" opacity="0.850"/><ellipse cx="0" cy="0" rx="3.600" ry="2.700" fill="#1c6a5c"/><ellipse cx="0" cy="0" rx="1.700" ry="1.600" fill="#0c4a40"/><path d="M-5.400 0c2-3.600 8.800-3.600 10.800 0" fill="none" stroke="#1c6a5c" stroke-width="0.900"/><path d="M-5.400 0c2 3.600 8.800 3.600 10.800 0" fill="none" stroke="#1c6a5c" stroke-width="0.900"/></g>
<g id="ruler"><path d="M0 0.300v3.700M2 2v2M4 2v2M6 1v3M8 0.300v3.700M10 1v3M12 2v2M14 2v2M16 0.300v3.700" stroke="#68708a" stroke-width="1" fill="none"/><path d="M-0.500 3.900h17" stroke="#68708a" stroke-width="1.200"/></g>
<g id="ruler9"><path d="M0 0.300v3.700M2 2v2M4 2v2M6 1v3M8 0.300v3.700" stroke="#68708a" stroke-width="1" fill="none"/><path d="M-0.500 3.900h9" stroke="#68708a" stroke-width="1.200"/></g>
<g id="redx"><path d="M1 1l6.500 6.500M7.500 1l-6.500 6.500" stroke="#a80c0c" stroke-width="2.400" fill="none"/></g>
<g id="sepdots">
<g fill="#f6f7fd"><rect x="0" y="0" width="1.5" height="1.5"/><rect x="0" y="4" width="1.5" height="1.5"/><rect x="0" y="8" width="1.5" height="1.5"/><rect x="0" y="12" width="1.5" height="1.5"/><rect x="0" y="16" width="1.5" height="1.5"/><rect x="0" y="20" width="1.5" height="1.5"/></g>
<g fill="#a9adc6"><rect x="1" y="1" width="1.3" height="1.3"/><rect x="1" y="5" width="1.3" height="1.3"/><rect x="1" y="9" width="1.3" height="1.3"/><rect x="1" y="13" width="1.3" height="1.3"/><rect x="1" y="17" width="1.3" height="1.3"/><rect x="1" y="21" width="1.3" height="1.3"/></g>
</g>
</defs>
<!-- new -->
<path d="M15.5 15.2h8l3.5 3.5v10.600h-11.500Z" fill="#dfe2f2" stroke="#888a9c" stroke-width="1.1"/><path d="M23.500 15.200v3.500h3.500" fill="none" stroke="#888a9c" stroke-width="1"/>
<!-- open -->
<g fill="none" stroke="#888a9c" stroke-width="1.1"><path d="M40 30v-10.500h5l1.500 1.500h5v3.500"/><path d="M40 30l5.500-5.500h12l-5.500 5.500Z" fill="#dcdfef"/><path d="M48 18c1.500-2.500 5-3 7.500 0.200"/></g><path d="M57.300 15.800l-0.300 4.200-3.600-1.600Z" fill="#888a9c"/>
<!-- save -->
<g fill="none" stroke="#888a9c" stroke-width="1.100"><rect x="69.800" y="16.500" width="13.600" height="14"/><path d="M72.700 16.500v6h8v-6"/></g><rect x="72.700" y="26.800" width="8" height="3.700" fill="#858796"/>
<!-- print -->
<path d="M100.500 23v-8.500h7l2 2v6.500Z" fill="#ffffff" stroke="#5a5c58" stroke-width="0.900"/><path d="M102.300 17.500h4M102.300 19.500h5.500M102.300 21.300h5.500" stroke="#555" stroke-width="0.800"/>
<path d="M96.800 25.500l2.500-2.800h11.500l2.500 2.800v5.200h-16.500Z" fill="#e6e0cc" stroke="#3c3e36" stroke-width="1.100"/><path d="M96.800 25.600h16.500" stroke="#3c3e36" stroke-width="0.900"/><rect x="98.300" y="27.300" width="2" height="1.600" fill="#4a4a4a"/><rect x="101.500" y="27.200" width="3.200" height="1.900" fill="#222"/>
<path d="M110.800 22.700l2.500 2.800v5.200l1-1v-5Z" fill="#6a6c60"/>
<!-- mail -->
<g fill="#dde0f0" stroke="#888a9c" stroke-width="1.100"><path d="M124.500 26.500v-8l3.500-4h5.500l4.800 4.500v7.500Z"/></g><rect x="134.800" y="18.800" width="1.500" height="1.500" fill="#888a9c"/>
<path d="M136.500 24c0-1.200 3-1.200 3 0v5.500c0 1.700-3.400 1.700-3.400 0v-4" fill="#dde0f0" stroke="#888a9c" stroke-width="1.100"/>
<!-- mail2 -->
<g fill="#dde0f0" stroke="#888a9c" stroke-width="1.100"><path d="M152.500 26.500v-8l3.500-4h5.500l4.800 4.500v7.500Z"/></g><rect x="162.800" y="18.800" width="1.500" height="1.500" fill="#888a9c"/>
<g fill="#dde0f0" stroke="#888a9c" stroke-width="1.100"><rect x="158" y="27" width="6" height="4.200" rx="2"/><rect x="162.800" y="27" width="6" height="4.200" rx="2"/></g><path d="M160.500 29.100h6" stroke="#888a9c" stroke-width="1.300"/>
<use href="#sepdots" x="177" y="12"/>
<!-- undo -->
<path d="M191.300 23.800c2.800-6 11.500-5.600 12.300 0c0.400 3-1.400 4.600-3.600 5" fill="none" stroke="#868898" stroke-width="2.400"/><path d="M187 20v6.900h6.800Z" fill="#868898"/>
<path d="M212.800 21h7.200l-3.600 4.200Z" fill="#868898"/>
<!-- redo -->
<path d="M242.700 23.800c-2.800-6-11.500-5.600-12.300 0c-0.400 3 1.400 4.600 3.600 5" fill="none" stroke="#868898" stroke-width="2.400"/><path d="M247 20v6.900h-6.800Z" fill="#868898"/>
<path d="M254.800 21h7.200l-3.600 4.200Z" fill="#868898"/>
<!-- regenerate -->
<g fill="none" stroke="#10109c" stroke-width="2.600"><path d="M273.500 24c0-3.500 3-5.200 6.500-4.600"/><path d="M285.200 21.800c0 3.500-3 5.200-6.500 4.600"/></g>
<path d="M279 16.200l5.200 3.400-5.200 3.400Z" fill="#10109c"/><path d="M279.700 29.800l-5.200-3.400 5.200-3.400Z" fill="#10109c"/>
<g fill="#fff"><rect x="273" y="25.300" width="1" height="1"/><rect x="284.800" y="19.500" width="1" height="1"/></g>
<!-- cut -->
<g fill="none" stroke="#888a9a" stroke-width="1.100"><path d="M302 13.800l4.800 10.500M309 13.800l-4.800 10.500"/><rect x="300.200" y="24.300" width="3.800" height="7" rx="1.900"/><rect x="307" y="24.300" width="3.800" height="7" rx="1.900"/></g>
<!-- copy -->
<g fill="#dfe2f2" stroke="#888a9a" stroke-width="1.100"><path d="M326.500 14.500h6.500l2.500 2.500v9h-9Z"/><path d="M333.800 20.800h6l2.500 2.500v8.200h-8.500Z"/></g>
<path d="M328 18.500h4.500M328 20.500h4.500M328 22.500h4.500M335.500 25.500h5.200M335.500 27.500h5.200M335.500 29.500h5.200" stroke="#888a9a" stroke-width="1"/>
<!-- paste -->
<g fill="#dfe2f2" stroke="#888a9a" stroke-width="1.100"><rect x="353.500" y="16" width="12.800" height="13.300"/><path d="M357 17.500c0-3 6-3 6 0Z"/><path d="M360.800 22.300h6.700l2.500 2.500v7.500h-9.200Z"/></g>
<path d="M362.500 26.500h5.800M362.500 28.500h5.800M362.500 30.500h5.800" stroke="#888a9a" stroke-width="1"/>
<!-- paste special -->
<g fill="#dfe2f2" stroke="#888a9a" stroke-width="1.100"><rect x="381.500" y="15" width="13.300" height="14.300"/><path d="M385 16.500c0-3 6-3 6 0Z"/><rect x="388.800" y="21.300" width="10.800" height="11"/></g>
<g fill="#777a8a"><rect x="390.500" y="23.300" width="1.600" height="1.600"/><rect x="390.500" y="26.100" width="1.600" height="1.600"/><rect x="390.500" y="28.900" width="1.600" height="1.600"/></g>
<path d="M393.500 24.100h4.500M393.500 26.900h4.500M393.500 29.700h4.500" stroke="#777a8a" stroke-width="1"/>

<!-- traffic light -->
<rect x="415.300" y="13.600" width="4.600" height="3.800" fill="#c49a9a" stroke="#a07878" stroke-width="0.600"/>
<rect x="415.300" y="18.600" width="4.600" height="3.800" fill="#eaea92" stroke="#b0b070" stroke-width="0.600"/>
<circle cx="417.800" cy="27.200" r="4.300" fill="#38b848" stroke="#0a6418" stroke-width="1.200"/>
<path d="M415.500 28.800l3.800-3.800M416.500 30l3.800-3.800" stroke="#8ee89a" stroke-width="0.800"/>
<!-- binoculars -->
<g fill="#1c1c1c"><rect x="438" y="19.800" width="6.800" height="10.400" rx="0.800"/><rect x="448" y="19.800" width="6.800" height="10.400" rx="0.800"/><rect x="439.300" y="16.300" width="4.200" height="4"/><rect x="449.300" y="16.300" width="4.200" height="4"/><rect x="444" y="19.300" width="4.800" height="5.200"/></g>
<g fill="#c8c8c8"><rect x="440" y="21" width="1.600" height="8.300"/><rect x="450" y="21" width="1.600" height="8.300"/></g>
<g fill="#ffffff"><rect x="441.600" y="22" width="1" height="6.500"/><rect x="451.600" y="22" width="1" height="6.500"/><rect x="440.300" y="17" width="1" height="2.300"/><rect x="450.300" y="17" width="1" height="2.300"/></g>
<!-- select button -->
<path d="M488 10.500h-24.500c-1.200 0-2 0.800-2 2v20.500c0 1.200 0.800 2 2 2h24.500Z" fill="#f5f6fc" stroke="#c3c6da" stroke-width="1"/>
<rect x="464.500" y="16.500" width="18.500" height="13" fill="none" stroke="#5c5e66" stroke-width="1.300" stroke-dasharray="4.200 2.600" stroke-dashoffset="1"/>
<path d="M490.800 21h7.400l-3.700 4.200Z" fill="#777a8c"/>
<use href="#sepdots" x="504" y="12"/>
<!-- repaint -->
<rect x="514.500" y="14" width="17" height="16.200" fill="#bcd6f6"/>
<path d="M514.500 30.200v-16.200l17 16.200Z" fill="#ffffff" opacity="0.850"/>
<rect x="514.500" y="13.700" width="17" height="16.500" fill="none" stroke="#182868" stroke-width="1.400"/><rect x="514" y="13" width="18" height="2.400" fill="#182868"/>
<path d="M521.500 30c0.300-3 2.500-4 4-5.500l3-3.300" fill="none" stroke="#101010" stroke-width="1.500"/>
<g fill="#3858b0"><rect x="520" y="22.500" width="0.900" height="0.900"/><rect x="522" y="20.500" width="0.900" height="0.900"/><rect x="523.800" y="23" width="0.900" height="0.900"/><rect x="521.500" y="25" width="0.900" height="0.900"/><rect x="524.500" y="19.500" width="0.900" height="0.900"/></g><rect x="518" y="19" width="1" height="1" fill="#d8d820"/>
<!-- graph nodes -->
<path d="M544.700 17l3.300 4.600-3.500 6.600M548 21.400h9" fill="none" stroke="#101010" stroke-width="1.200"/>
<circle cx="544.700" cy="16.800" r="2.400" fill="#28b048" stroke="#0a7020" stroke-width="0.700"/><circle cx="544.300" cy="28.400" r="2.400" fill="#30d4c4" stroke="#109888" stroke-width="0.700"/><circle cx="557.500" cy="21.200" r="2.600" fill="#c41424" stroke="#7a0810" stroke-width="0.700"/>
<!-- redraw magnifier -->
<circle cx="575.200" cy="19.100" r="4.600" fill="#f4f5fc" stroke="#181818" stroke-width="1.300"/><circle cx="575.200" cy="19.100" r="1.100" fill="#101010"/>
<path d="M578.600 22.600l5.800 5.800" stroke="#7a5a50" stroke-width="2"/>
<path d="M581.500 14.300h5M582.500 16.300h4" stroke="#1838b0" stroke-width="1"/>
<path d="M583 18.500h3.300c1 1.500 0.500 4-1.800 5.500" fill="none" stroke="#1838b0" stroke-width="1.100"/>
<path d="M575.800 25.500c-1.800 1.500-1.500 4 0.800 5.200" fill="none" stroke="#1838b0" stroke-width="1.300"/><path d="M576 32l4-0.800-2.500-3Z" fill="#1838b0"/>
<!-- gray wire box -->
<g fill="none" stroke="#9a9ca8" stroke-width="1"><path d="M598.800 21.500l6-4.500 10.800-0.500-0.500 11-6.500 4.500-6.500-2.500Z"/><path d="M604.800 17l1 6.500-2.800 6M605.800 23.500l9.300 0.300M606 23.500l2.500 8.500M609.500 17v6"/></g>
<!-- sphere -->
<circle cx="635.100" cy="22.300" r="8.600" fill="url(#gsph)"/>
<path d="M652 21.300h7l-3.500 4Z" fill="#101018"/>
<!-- zoom in -->
<path d="M678 24l6.800 6.500" stroke="#6a5048" stroke-width="2"/><circle cx="674.200" cy="20" r="5.400" fill="#fbfbfe" stroke="#202020" stroke-width="1.200"/><path d="M671.200 20h6M674.200 17v6" stroke="#101010" stroke-width="1.800"/>
<!-- zoom out -->
<path d="M706.300 24l6.800 6.500" stroke="#6a5048" stroke-width="2"/><circle cx="702.500" cy="20" r="5.400" fill="#fbfbfe" stroke="#202020" stroke-width="1.200"/><path d="M699.500 20h6" stroke="#101010" stroke-width="1.800"/>
<!-- zoom fit -->
<rect x="723.500" y="14" width="17" height="16.300" fill="#fbfbfe" stroke="#182868" stroke-width="1.300"/><rect x="723" y="13.300" width="18" height="2.300" fill="#182868"/>
<path d="M735.200 26.800l5.600 4.700" stroke="#6a5048" stroke-width="2"/><circle cx="731.800" cy="23.400" r="4.700" fill="#fbfbfe" stroke="#202020" stroke-width="1.200"/>

<!-- orient -->
<path d="M752.600 20.800l3-2.600h7.200v9.300l-3 2.700h-7.200Z" fill="#7cd4dc" stroke="#4a8890" stroke-width="0.600"/><rect x="752.600" y="20.800" width="7.200" height="9.400" fill="#ffffff" stroke="#8aa0a8" stroke-width="0.600"/>
<path d="M757.500 12.500v6.500M755 16.500l2.500 3 2.500-3Z" stroke="#101010" stroke-width="1.300" fill="#101010"/>
<path d="M770 25.500h-6M766 23l-3 2.500 3 2.500Z" stroke="#101010" stroke-width="1.300" fill="#101010"/>
<!-- AB cube -->
<path d="M779.500 19.500l2.500-2.300h8.500v8.800l-2.500 2.300h-8.500Z" fill="#b8bccc" stroke="#8a8e9e" stroke-width="0.600"/><rect x="779.500" y="19.500" width="8.500" height="8.800" fill="#fcfcff" stroke="#a0a4b4" stroke-width="0.600"/>
<text x="788.300" y="19.800" style="font-family:'Liberation Mono',monospace;font-size:9px;letter-spacing:-0.3px" fill="#101010">AB</text>
<path d="M791.500 21v6" stroke="#50545e" stroke-width="1.600" stroke-dasharray="1.200 0.800"/>
<path d="M793 28.300h6.400l-3.200 3.200Z" fill="#101010"/>
<!-- layers -->
<g stroke="#101010" stroke-width="0.900"><path d="M808.500 29.800l5-4.500h12.500l-5 4.500Z" fill="#f4fcf8"/><path d="M808.500 25.300l5-4.500h12.500l-5 4.500Z" fill="#f4fcf8"/><path d="M808.500 20.800l5-4.500h12.500l-5 4.500Z" fill="#84e4e0"/></g>
<!-- active dot button -->
<rect x="831.500" y="10.500" width="27" height="24" rx="2.500" fill="#cfd2e2" stroke="#62646e" stroke-width="1.100"/>
<circle cx="846.100" cy="24.500" r="5" fill="url(#gdot)"/>
<path d="M862 21.200h7l-3.500 4Z" fill="#101018"/>
<!-- table + camera -->
<rect x="877.500" y="13.500" width="15" height="16.500" fill="#fcfcff" stroke="#70727e" stroke-width="0.900"/>
<path d="M877.500 17h15M877.500 20.200h15M877.500 23.400h15M877.500 26.600h15M882 13.500v16.500" stroke="#8a8c98" stroke-width="0.800"/>
<rect x="884.300" y="24.800" width="11.700" height="7.200" rx="1" fill="#c8c8cc" stroke="#202020" stroke-width="1"/><rect x="886" y="23.300" width="3.500" height="1.800" fill="#202020"/>
<rect x="887.800" y="26.300" width="4.600" height="4.200" fill="#f4f4f8" stroke="#202020" stroke-width="1.100"/>
<use href="#sepdots" x="903" y="12"/>
<!-- wireframe cube -->
<g fill="none" stroke="#454a5c" stroke-width="1.100"><rect x="914.500" y="19.800" width="11" height="10.800"/><rect x="918.800" y="16" width="11" height="10.800"/><path d="M914.500 19.800l4.300-3.800M925.500 19.800l4.300-3.800M914.500 30.600l4.300-3.800M925.500 30.600l4.300-3.800"/></g>
<!-- hidden cube -->
<g fill="none" stroke="#a2a6b6" stroke-width="0.900"><path d="M946.600 16v10.800h11M946.600 26.800l-4.300 3.800"/></g>
<g fill="none" stroke="#454a5c" stroke-width="1.100"><rect x="942.300" y="19.800" width="11" height="10.800"/><path d="M942.300 19.800l4.300-3.800h11v10.800l-4.300 3.800M953.300 19.800l4.300-3.800"/></g>
<!-- no hidden cube -->
<g fill="none" stroke="#454a5c" stroke-width="1.100"><rect x="970.800" y="19.800" width="11" height="10.800"/><path d="M970.800 19.800l4.300-3.800h11v10.800l-4.300 3.800M981.800 19.800l4.300-3.800"/></g>
<!-- shaded cube (active) -->
<rect x="992.500" y="10.500" width="27" height="24.500" rx="3" fill="#d1d4e3" stroke="#666874" stroke-width="1.100"/>
<path d="M999.300 20.300l4-3.500h11.800l-3.800 3.500Z" fill="#7eeae2"/>
<path d="M1011.300 20.300l3.800-3.500v11.500l-3.800 3.400Z" fill="#2a8a80"/>
<path d="M1012 20.500v11M1013 19.500v11M1014 18.500v11" stroke="#6ac0b8" stroke-width="0.400"/>
<rect x="999.300" y="20.300" width="12" height="11.400" fill="#ffffff"/>
<g transform="translate(1022 12)"><g fill="#f6f7fd"><rect x="0" y="0" width="1.500" height="1.500"/><rect x="0" y="4" width="1.500" height="1.500"/><rect x="0" y="8" width="1.500" height="1.500"/><rect x="0" y="12" width="1.500" height="1.500"/><rect x="0" y="16" width="1.500" height="1.500"/><rect x="0" y="20" width="1.500" height="1.500"/></g><g fill="#c4a6c4"><rect x="1" y="1" width="1.300" height="1.300"/><rect x="1" y="5" width="1.300" height="1.300"/><rect x="1" y="9" width="1.300" height="1.300"/><rect x="1" y="13" width="1.300" height="1.300"/><rect x="1" y="17" width="1.300" height="1.300"/><rect x="1" y="21" width="1.300" height="1.300"/></g></g>
<!-- datum plane -->
<path d="M1036.500 17.300h13l-4.500 10.700h-13.500Z" fill="none" stroke="#8b4a2a" stroke-width="1.300"/>
<use href="#eye" x="1045.900" y="30.300"/>
<!-- axis -->
<path d="M1071.800 12.800l-10.300 19.200" stroke="#8b4a2a" stroke-width="1.400" stroke-dasharray="4 2" fill="none"/>
<use href="#eye" x="1073" y="30.300"/>
<!-- points -->
<g stroke="#b06a20" stroke-width="1.400"><path d="M1091 13.400l4.800 4.800M1095.800 13.400l-4.800 4.800M1098.800 18.800l4.800 4.800M1103.600 18.800l-4.800 4.800M1086.800 23.600l4.800 4.800M1091.600 23.600l-4.800 4.800"/></g>
<use href="#eye" x="1101.900" y="30.300"/>
<!-- csys -->
<g stroke="#8b4a2a" stroke-width="1.200" fill="none"><path d="M1115 23.300h11.500M1119.500 15.500l7 14M1127.500 15l-8 15"/></g>
<g style="font-family:'Liberation Sans',sans-serif;font-size:7px" fill="#50586a"><text x="1115.500" y="16.500">y</text><text x="1130.500" y="25">x</text><text x="1115.500" y="32.500">z</text></g>
<use href="#eye" x="1129.500" y="30.300"/>
<!-- last active -->
<rect x="1139.700" y="10.500" width="30" height="24.500" rx="3" fill="#d1d4e3" stroke="#666874" stroke-width="1.100"/>
<rect x="1144.300" y="14.300" width="11.700" height="8.200" fill="#ffffa2" stroke="#84843c" stroke-width="1"/>
<path d="M1157 19h6M1163 19l-4.500 8.500" stroke="#101010" stroke-width="1.200" fill="none"/>
<use href="#eye" x="1158.500" y="30.300"/>

<use href="#ruler" x="12.500" y="57"/><use href="#ruler" x="40.500" y="57"/><use href="#ruler" x="68.500" y="57"/><use href="#ruler" x="96.500" y="57"/><use href="#ruler" x="124.500" y="57"/><use href="#ruler" x="152.500" y="57"/><use href="#ruler" x="180.500" y="57"/><use href="#ruler" x="208.500" y="57"/>
<!-- A curvature -->
<g id="icA">
<path d="M14 52.500c5-3.500 10-3 14-8.500M16 54c5-2.500 12-1 16-4M13 49c6-4 12-2.500 18-7.500" fill="none" stroke="#e4a6e4" stroke-width="1.100"/>
<path d="M28.500 41l2.500 2.500M31 41l-2.500 2.500" stroke="#d080d0" stroke-width="0.900"/>
<path d="M22.500 44.500c-5-0.500-10 2-10.300 5.500c-0.300 3.500 4 5.800 8.300 5.300" fill="none" stroke="#2434a4" stroke-width="1.100"/>
<path d="M12.500 50.500l6-1.500M13.500 53l6-1.800M16.500 55l4-2.500M19 46.500l-3 3" fill="none" stroke="#2434a4" stroke-width="0.800"/>
</g>
<!-- B sections -->
<g id="icB">
<path d="M40 55.500v-7c0-4 4-6.800 9.500-6.800s9.500 2.800 9.500 6.800v7l-3.500-3.500h-12Z" fill="#dcecf4" stroke="#4e5e7e" stroke-width="1.100"/>
<path d="M43.500 50c0.500-4 4-6 7.500-6M46.500 50.500c0.500-3 3-4.500 6-4.500c2 0 1.500 2.500-1.500 4.500M47 53c4-1 8-4 10-8M50 53.500c3-1 6-3 8.500-6" fill="none" stroke="#4e5e7e" stroke-width="0.900"/>
</g>
<!-- C offset -->
<path d="M68.500 45.500c3-3.500 6-3.500 9 0s6 3.500 9-1.500M68.500 53c3-3.500 6-3.500 9 0s6 3.500 9-1.500" fill="none" stroke="#c48cd8" stroke-width="1.800"/>
<!-- D shaded curvature -->
<g clip-path="url(#domeD)"><rect x="95" y="41" width="21" height="16" fill="#2848e0"/>
<ellipse cx="103" cy="46.500" rx="10" ry="6.500" fill="#28c8d8"/><ellipse cx="103" cy="46.300" rx="7.500" ry="5" fill="#40d060"/><ellipse cx="102.500" cy="46" rx="4.500" ry="3.200" fill="#c4e624"/>
<path d="M110 41.500c3 2 5 6 5 14h-3c-0.500-6-2-10-5-12.500Z" fill="#7028b0"/><path d="M112.500 46c2 3 2.500 6 2.500 10l-4-4Z" fill="#e02828"/><path d="M113 52l2 4-3.500-3Z" fill="#f0a020"/>
</g>
<!-- E reflection -->
<g clip-path="url(#domeE)"><rect x="122" y="40" width="22" height="17" fill="#858585"/>
<path d="M137 42l7 2v13h-4l-1-4c-1-4-0.500-8-2-11Z" fill="#101010"/><path d="M122 52c3 0.500 8 0 12-2l-4 3.500h-5l-3 3.500Z" fill="#181818"/>
<ellipse cx="131.500" cy="46.800" rx="5" ry="2.800" fill="#ffffff" transform="rotate(-12 131.500 46.800)"/>
<path d="M133 51.500c3-1 5.500-3.500 7-6.500" stroke="#ffffff" stroke-width="1" fill="none"/>
</g>
<!-- F draft -->
<rect x="153.500" y="42.300" width="9.500" height="2.700" fill="#ffffff" stroke="#9a9eb8" stroke-width="0.500"/>
<path d="M161.500 41.500h4.500l3 7-4 6.500h-3.500Z" fill="#a4c4f2" stroke="#6a82b8" stroke-width="0.500"/>
<path d="M158.800 45.200l6.700 9.800h-6.700Z" fill="#e4a2e6"/>
<path d="M158.800 42v13M153.500 45.200h5.500M153 55.300h13.500M159 45.200l6.500 9.800" stroke="#202080" stroke-width="1.100" fill="none"/>
<!-- G slope -->
<path d="M180 55.500v-13.500c4-1 12-1 16 1c2.500 1.500 2.500 8 2.500 12.500l-3.500-3.500h-12Z" fill="#d4e4fa" stroke="#4e5e7e" stroke-width="0.900"/>
<path d="M180 41.500v14.500l2-1.500v-12Z" fill="#1828a0"/>
<path d="M182 42.500l11.500 5.500-11.500 6.500Z" fill="#20c0c0"/><path d="M182 44.500l11.500 3.500-11.500 6.500Z" fill="#40d040"/><path d="M182 47l11.500 1-11.500 6.500Z" fill="#e8e020"/><path d="M182 49.500l11.500-1.500-11.500 6.500Z" fill="#f09020"/><path d="M182 52l11.500-4-11.500 6.500Z" fill="#e02020"/>
<path d="M182 42.500v12" stroke="#2060e0" stroke-width="1.200"/>
<!-- H mesh -->
<g id="icH">
<path d="M207.500 55.500v-7c0-4 4-6.800 9.700-6.800s9.700 2.800 9.700 6.800v7l-3.500-3.500h-12.400Z" fill="#c4f2c6" stroke="#3c4c5c" stroke-width="1"/>
<path d="M213 42.500c-1 3-1 6-2 9.500M217.200 41.800v10.200M221.500 42.500c1 3 1 6 2 9.500M207.800 47.500c6-1.500 13-1.500 19 0M207.800 51c3-1 5-1 7 0.500M219 51.500c3-1.500 5-1.500 7.800-0.500M213 46.800l4.200 3 4.200-3" fill="none" stroke="#182028" stroke-width="0.800"/>
</g>
<!-- I saved analysis -->
<use href="#ruler" x="234.500" y="48"/><path d="M252.500 47v5" stroke="#68708a" stroke-width="1"/>
<rect x="245.800" y="52" width="9" height="8.800" fill="#d8ecec" stroke="#5a9498" stroke-width="1"/><rect x="247.500" y="52.300" width="5.300" height="3" fill="#ffffff" stroke="#5a9498" stroke-width="0.600"/><rect x="247.500" y="57" width="5.500" height="3.500" fill="#7ab0b4"/>
<!-- J hide -->
<use href="#ruler" x="263.500" y="48"/>
<path d="M270.500 48.500l12.500 12" stroke="#202020" stroke-width="2.200"/><path d="M273 50l8 8" stroke="#b02020" stroke-width="0.800"/><path d="M276 49l6 7M273 53.500l7 5" stroke="#305030" stroke-width="0.900"/>
<!-- K curvature + X -->
<g transform="translate(281.500 1.500) scale(0.930)"><path d="M14 52.500c5-3.500 10-3 14-8.500M16 54c5-2.500 12-1 16-4M13 49c6-4 12-2.500 18-7.500" fill="none" stroke="#e4a6e4" stroke-width="1.100"/><path d="M28.500 41l2.500 2.500M31 41l-2.500 2.500" stroke="#d080d0" stroke-width="0.900"/><path d="M22.500 44.500c-5-0.500-10 2-10.300 5.500c-0.300 3.500 4 5.800 8.300 5.300" fill="none" stroke="#2434a4" stroke-width="1.100"/><path d="M12.500 50.500l6-1.500M13.500 53l6-1.800M16.500 55l4-2.500M19 46.500l-3 3" fill="none" stroke="#2434a4" stroke-width="0.800"/></g>
<use href="#ruler9" x="292.500" y="57"/><use href="#redx" x="302.800" y="53"/>
<!-- L sections + X -->
<g transform="translate(282.500 2) scale(0.930)"><path d="M40 55.500v-7c0-4 4-6.800 9.500-6.800s9.500 2.800 9.500 6.800v7l-3.500-3.500h-12Z" fill="#dcecf4" stroke="#4e5e7e" stroke-width="1.100"/><path d="M43.500 50c0.500-4 4-6 7.500-6M46.500 50.500c0.500-3 3-4.500 6-4.500c2 0 1.500 2.500-1.500 4.500M47 53c4-1 8-4 10-8M50 53.500c3-1 6-3 8.500-6" fill="none" stroke="#4e5e7e" stroke-width="0.900"/></g>
<use href="#ruler9" x="320.500" y="57"/><use href="#redx" x="330.800" y="53"/>
<!-- M mesh + X -->
<g transform="translate(155 2) scale(0.930)"><path d="M207.500 55.500v-7c0-4 4-6.800 9.700-6.800s9.700 2.800 9.700 6.800v7l-3.500-3.500h-12.400Z" fill="#c4f2c6" stroke="#3c4c5c" stroke-width="1"/><path d="M213 42.500c-1 3-1 6-2 9.500M217.200 41.800v10.200M221.500 42.500c1 3 1 6 2 9.500M207.800 47.500c6-1.500 13-1.500 19 0M207.800 51c3-1 5-1 7 0.500M219 51.500c3-1.500 5-1.500 7.800-0.500M213 46.800l4.200 3 4.200-3" fill="none" stroke="#182028" stroke-width="0.800"/></g>
<use href="#ruler9" x="348.500" y="57"/><use href="#redx" x="359" y="53"/>
<use href="#sepdots" x="372.500" y="40"/>
<!-- help -->
<path d="M384 43.500v12l2.800-2.600 2.200 5 2-0.900-2.200-4.900h3.800Z" fill="#101010"/>
<text x="391.300" y="55.300" style="font-family:'Liberation Sans',sans-serif;font-size:15px;font-weight:bold" fill="#6a1e96">?</text>

<use href="#sepdots" x="2" y="12"/><use href="#sepdots" x="2" y="40"/>

</svg>
<div class="abs" style="left:1059px;top:72px;width:1px;height:26px;background:#a4a6b6;"></div><div class="abs" style="left:1085px;top:72px;width:1px;height:26px;background:#a4a6b6;"></div>
<svg class="abs" style="left:1064px;top:74px" width="18" height="24" viewBox="1064 74 18 24"><circle cx="1072.300" cy="78.300" r="1.900" fill="#f6f6fa" stroke="#707078" stroke-width="0.900"/><circle cx="1072.300" cy="83.300" r="1.900" fill="#f6f6fa" stroke="#707078" stroke-width="0.900"/><circle cx="1072.300" cy="90.600" r="3.800" fill="#b4b4b8" stroke="#6a6a70" stroke-width="1.100"/><path d="M1070 92.500l4-4M1071.300 93.500l3.500-3.500" stroke="#e8e8ec" stroke-width="0.700"/></svg><!--/ICONS-->
</body>
</html>
